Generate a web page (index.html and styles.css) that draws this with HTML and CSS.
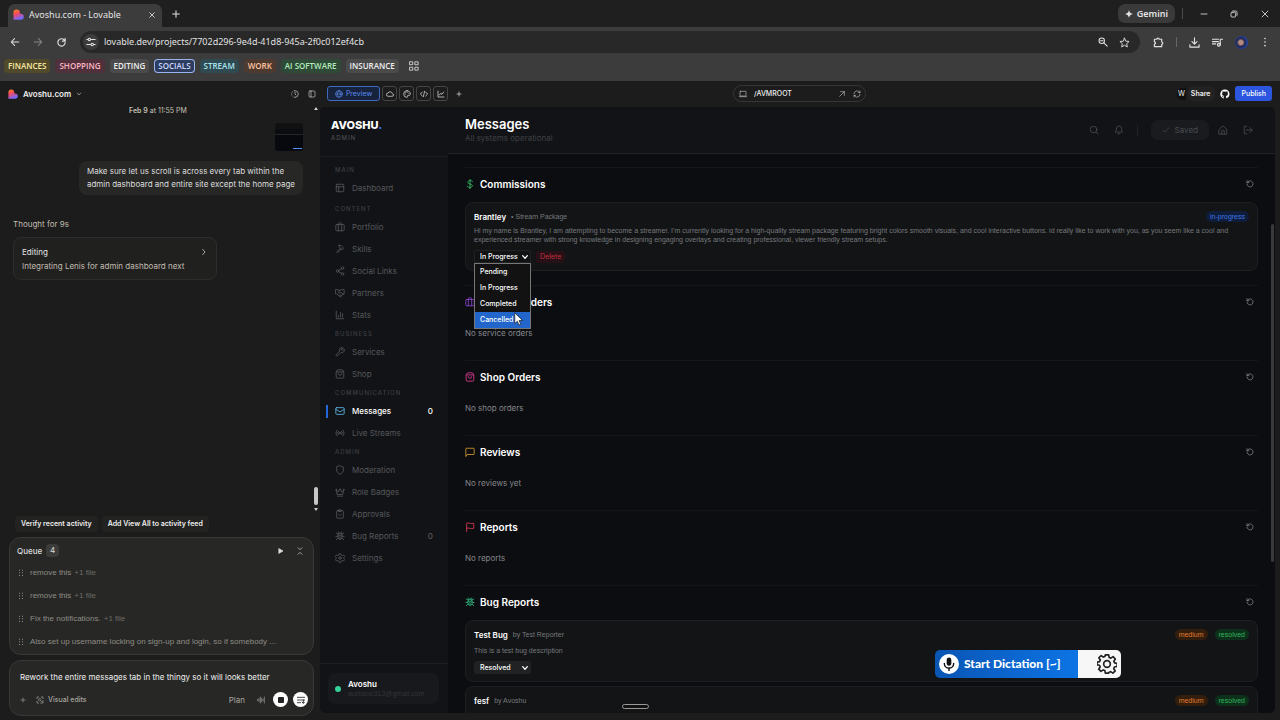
FILE: index.html
```html
<!DOCTYPE html>
<html lang="en">
<head>
<meta charset="utf-8">
<title>Avoshu.com - Lovable</title>
<link rel="stylesheet" href="styles.css">
</head>
<body>
<svg class="sprite" aria-hidden="true">
  <defs>
    <linearGradient id="heart" x1="0" y1="0" x2="0.4" y2="1"><stop offset="0.1" stop-color="#ff7a1f"/><stop offset="0.5" stop-color="#f0486a"/><stop offset="1" stop-color="#6f6bff"/></linearGradient>
    <symbol id="logo" viewBox="0 0 24 24"><path fill="url(#heart)" stroke="none" d="M1 8a7 7 0 0 1 14 0v2.500h2a6.500 6.500 0 0 1 0 13H1z"/></symbol>
    <symbol id="x" viewBox="0 0 24 24"><path d="M5 5l14 14M19 5L5 19"/></symbol>
    <symbol id="plus" viewBox="0 0 24 24"><path d="M12 4v16M4 12h16"/></symbol>
    <symbol id="back" viewBox="0 0 24 24"><path d="M21 12H3M11 4l-8 8 8 8"/></symbol>
    <symbol id="forward" viewBox="0 0 24 24"><path d="M3 12h18M13 4l8 8-8 8"/></symbol>
    <symbol id="reload" viewBox="0 0 24 24"><path d="M20 12a8 8 0 1 1-2.500-6L20 9M20 3v6h-6"/></symbol>
    <symbol id="tune" viewBox="0 0 24 24"><path d="M2 6h3M13 6h9M2 18h9M19 18h3"/><circle cx="8" cy="6" r="3"/><circle cx="15" cy="18" r="3"/></symbol>
    <symbol id="apps" viewBox="0 0 24 24"><path d="M2 2h7v7H2zM15 2h7v7h-7zM2 15h7v7H2zM15 15h7v7h-7z"/></symbol>
    <symbol id="zoomout" viewBox="0 0 24 24"><circle cx="9" cy="9" r="6.500"/><path d="M14 14l8 8M6 9h6"/></symbol>
    <symbol id="star" viewBox="0 0 24 24"><path d="M12 2.500l3 6.600 7 .7-5.300 4.800 1.600 7.100L12 18l-6.300 3.700 1.600-7.100L2 9.800l7-.7z"/></symbol>
    <symbol id="puzzle" viewBox="0 0 24 24"><path d="M3 5h5.500a2.500 2.500 0 0 1 5 0H19v6a2.500 2.500 0 0 1 0 5v5H3v-5.500a2.500 2.500 0 0 0 0-5z"/></symbol>
    <symbol id="download" viewBox="0 0 24 24"><path d="M12 2v13M6.500 10l5.500 5.500 5.500-5.500M2 17v5h20v-5"/></symbol>
    <symbol id="music" viewBox="0 0 24 24"><path d="M1 5h13M1 10h13M1 15h7M18 17V5h5"/><circle cx="15" cy="17" r="3"/></symbol>
    <symbol id="dots" viewBox="0 0 24 24"><g fill="currentColor" stroke="none"><circle cx="12" cy="3.500" r="2"/><circle cx="12" cy="12" r="2"/><circle cx="12" cy="20.500" r="2"/></g></symbol>
    <symbol id="spark" viewBox="0 0 24 24"><path fill="currentColor" stroke="none" d="M12 0c1 7 5 11 12 12-7 1-11 5-12 12-1-7-5-11-12-12C7 11 11 7 12 0z"/></symbol>
    <symbol id="minus" viewBox="0 0 24 24"><path d="M3 12h18"/></symbol>
    <symbol id="restore" viewBox="0 0 24 24"><rect x="3" y="7" width="14" height="14" rx="3"/><path d="M8 3h9a4 4 0 0 1 4 4v9"/></symbol>
    <symbol id="down" viewBox="0 0 24 24"><path d="M5 8l7 8 7-8"/></symbol>
    <symbol id="right" viewBox="0 0 24 24"><path d="M8 4l7 8-7 8"/></symbol>
    <symbol id="history" viewBox="0 0 24 24"><path d="M12 2a10 10 0 0 1 0 20M12 7v5l3 3"/><path stroke-dasharray="2 5" d="M12 22a10 10 0 0 1 0-20"/></symbol>
    <symbol id="panel" viewBox="0 0 24 24"><rect x="3" y="3" width="18" height="18" rx="3"/><path d="M9 3v18"/></symbol>
    <symbol id="globe" viewBox="0 0 24 24"><circle cx="12" cy="12" r="10"/><path d="M2 12h20M12 2c-6 6-6 14 0 20 6-6 6-14 0-20z"/></symbol>
    <symbol id="cloud" viewBox="0 0 24 24"><path d="M6.500 19a5 5 0 0 1-.5-10 7 7 0 0 1 13 2 4 4 0 0 1-.5 8z"/></symbol>
    <symbol id="palette" viewBox="0 0 24 24"><path d="M12 2a10 10 0 1 0 0 20c2 0 2-2 1.500-3-.8-2 .5-3 2-3H18c3 0 4-2 4-4 0-6-5-10-10-10z"/><path d="M7 12h.1M8.500 7.500h.1M13.500 6.500h.1M17.500 10h.1"/></symbol>
    <symbol id="code" viewBox="0 0 24 24"><path d="M7 6l-6 6 6 6M17 6l6 6-6 6M14 4l-4 16"/></symbol>
    <symbol id="chart" viewBox="0 0 24 24"><path d="M3 3v18h18M7 15l4-5 4 3 5-7"/></symbol>
    <symbol id="laptop" viewBox="0 0 24 24"><rect x="3" y="4" width="18" height="14" rx="1"/><path d="M1 20h22"/></symbol>
    <symbol id="upright" viewBox="0 0 24 24"><path d="M5 19L19 5M8 5h11v11"/></symbol>
    <symbol id="refresh" viewBox="0 0 24 24"><path d="M3 11a9 9 0 0 1 16-5l2 2M21 3v5h-5M21 13a9 9 0 0 1-16 5l-2-2M3 21v-5h5"/></symbol>
    <symbol id="github" viewBox="0 0 24 24"><path fill="currentColor" stroke="none" d="M12 1a11 11 0 0 0-3.500 21.500c.6.100.8-.3.800-.6v-2c-3 .7-3.700-1.400-3.700-1.400-.5-1.300-1.200-1.600-1.200-1.600-1-.7.1-.7.100-.7 1.100.1 1.700 1.100 1.700 1.100 1 1.700 2.600 1.200 3.200.9.100-.7.400-1.200.7-1.500-2.500-.3-5-1.200-5-5.400 0-1.200.4-2.200 1.100-3-.1-.3-.5-1.400.1-2.900 0 0 .9-.3 3 1.100a10.500 10.500 0 0 1 5.500 0c2.100-1.400 3-1.100 3-1.100.6 1.500.2 2.600.1 2.900.7.800 1.100 1.800 1.100 3 0 4.200-2.600 5.100-5 5.400.4.300.7 1 .7 2v3c0 .3.200.7.800.6A11 11 0 0 0 12 1z"/></symbol>
    <symbol id="search" viewBox="0 0 24 24"><circle cx="11" cy="11" r="8"/><path d="M17 17l5 5"/></symbol>
    <symbol id="bell" viewBox="0 0 24 24"><path d="M6 8a6 6 0 0 1 12 0c0 7 3 8 3 9H3c0-1 3-2 3-9M10 21h4"/></symbol>
    <symbol id="check" viewBox="0 0 24 24"><path d="M4 13l5 5L20 6"/></symbol>
    <symbol id="home" viewBox="0 0 24 24"><path d="M3 10l9-8 9 8v12H3zM9 22v-9h6v9"/></symbol>
    <symbol id="logout" viewBox="0 0 24 24"><path d="M9 3H3v18h6M8 12h14M16 6l6 6-6 6"/></symbol>
    <symbol id="layout" viewBox="0 0 24 24"><rect x="3" y="3" width="18" height="18" rx="2"/><path d="M3 9h18M9 9v12"/></symbol>
    <symbol id="case" viewBox="0 0 24 24"><rect x="2" y="6" width="20" height="15" rx="2"/><path d="M8 21V4a2 2 0 0 1 2-2h4a2 2 0 0 1 2 2v17"/></symbol>
    <symbol id="hammer" viewBox="0 0 24 24"><path d="M13 10l-9 9 2 2 9-9M9 3c5 0 8 2 10 5l2 2-4 4-7-7c0-2 0-3-1-4z"/></symbol>
    <symbol id="share" viewBox="0 0 24 24"><circle cx="18" cy="5" r="3"/><circle cx="6" cy="12" r="3"/><circle cx="18" cy="19" r="3"/><path d="M8.600 13.500l6.800 4M15.400 6.500l-6.800 4"/></symbol>
    <symbol id="shake" viewBox="0 0 24 24"><path d="M2 4h5l4 2 4-2h7v10h-2l-7 7-9-7H2zM11 6l-3 5c2 2 4 1 6-1l6 5M13 16l3 3M10 18l3 3"/></symbol>
    <symbol id="bars" viewBox="0 0 24 24"><path d="M3 3v18h18M8 17v-4M13 17V6M18 17v-8"/></symbol>
    <symbol id="wrench" viewBox="0 0 24 24"><path d="M15 6l3 3 4-4a6 6 0 0 1-8 8l-8 8a2 2 0 0 1-3-3l8-8a6 6 0 0 1 8-8z"/></symbol>
    <symbol id="bag" viewBox="0 0 24 24"><path d="M3 7l3-5h12l3 5v13a2 2 0 0 1-2 2H5a2 2 0 0 1-2-2zM3 7h18M8 11a4 4 0 0 0 8 0"/></symbol>
    <symbol id="mail" viewBox="0 0 24 24"><rect x="2" y="4" width="20" height="16" rx="2"/><path d="M2 8l10 6 10-6"/></symbol>
    <symbol id="radio" viewBox="0 0 24 24"><circle cx="12" cy="12" r="2"/><path d="M8 8a6 6 0 0 0 0 8M16 8a6 6 0 0 1 0 8M5 5a10 10 0 0 0 0 14M19 5a10 10 0 0 1 0 14"/></symbol>
    <symbol id="shield" viewBox="0 0 24 24"><path d="M12 2l8 3v7c0 5-3 8-8 10-5-2-8-5-8-10V5z"/></symbol>
    <symbol id="crown" viewBox="0 0 24 24"><path d="M3 8l5 4 4-8 4 8 5-4-3 10H6zM6 22h12"/><circle cx="3" cy="6" r="1"/><circle cx="21" cy="6" r="1"/></symbol>
    <symbol id="clip" viewBox="0 0 24 24"><rect x="4" y="4" width="16" height="18" rx="2"/><path d="M9 2h6v4H9zM9 14l2 2 4-4"/></symbol>
    <symbol id="bug" viewBox="0 0 24 24"><path d="M7 10a5 5 0 0 1 10 0v5a5 5 0 0 1-10 0zM12 20v-9M8 2l2 3M16 2l-2 3M8 7l-5-2M16 7l5-2M7 13H2M17 13h5M7 17l-4 4M17 17l4 4M7 10h10"/></symbol>
    <symbol id="hexgear" viewBox="0 0 24 24"><path d="M10 2h4l1 3 3 1 3-1 2 4-2 2v2l2 2-2 4-3-1-3 1-1 4h-4l-1-4-3-1-3 1-2-4 2-2v-2L1 9l2-4 3 1 3-1z"/><circle cx="12" cy="12" r="3"/></symbol>
    <symbol id="dollar" viewBox="0 0 24 24"><path d="M12 1v22M18 6c-1-2-3-2-6-2-7 0-7 8 0 8s8 8 0 8c-4 0-6-1-7-3"/></symbol>
    <symbol id="undo" viewBox="0 0 24 24"><path d="M3 12a9 9 0 1 0 3-7L3 8M3 2v6h6"/></symbol>
    <symbol id="message" viewBox="0 0 24 24"><path d="M2 22V4a1 1 0 0 1 1-1h18a1 1 0 0 1 1 1v13a1 1 0 0 1-1 1H6z"/></symbol>
    <symbol id="flag" viewBox="0 0 24 24"><path d="M4 23V3c5-3 9 3 17 0v12c-8 3-12-3-17 0"/></symbol>
    <symbol id="play" viewBox="0 0 24 24"><path fill="currentColor" d="M6 5l12 7-12 7z"/></symbol>
    <symbol id="collapse" viewBox="0 0 24 24"><path d="M6 2l6 6 6-6M6 22l6-6 6 6"/></symbol>
    <symbol id="grip" viewBox="0 0 24 24"><g fill="currentColor" stroke="none"><path d="M6 2h3v3H6zM15 2h3v3h-3zM6 10h3v3H6zM15 10h3v3h-3zM6 18h3v3H6zM15 18h3v3h-3z"/></g></symbol>
    <symbol id="select" viewBox="0 0 24 24"><path d="M3 8V3h5M16 3h5v5M3 16v5h5M14 21h7v-7M9 15a4 4 0 1 1 6-6M13 13l6 5"/></symbol>
    <symbol id="wave" viewBox="0 0 24 24"><path d="M2 10v4M6 7v10M10 3v18M14 7v10M18 9v6M22 3v18"/></symbol>
    <symbol id="queue" viewBox="0 0 24 24"><path d="M1 4h22M1 12h22M1 20h10M19 12v9M15 18l4 4 4-4"/></symbol>
    <symbol id="mic" viewBox="0 0 24 24"><rect x="8" y="1" width="8" height="14" rx="4" fill="currentColor" stroke="none"/><path d="M4 11a8 8 0 0 0 16 0M12 19v4"/></symbol>
    <symbol id="gear" viewBox="0 0 24 24"><path d="M10 1h4l.6 3.200 2 .8 2.700-1.800 2.700 2.800-1.800 2.600.9 2.100 3 .5v3.800l-3.200.6-.8 2 1.800 2.700-2.800 2.700-2.600-1.800-2 .8L14 23h-4l-.6-3.100-2-.8-2.700 1.800L2 18.200l1.800-2.700-.8-2L0 13V9.700l3.100-.6.900-2L2.200 4.500 5 1.900l2.500 1.800 2-.8z"/><circle cx="12" cy="12" r="4"/></symbol>
  </defs>
</svg>

<header class="browser">
  <div class="tabstrip">
    <div class="tab"><svg class="i12"><use href="#logo"/></svg><span class="tab-title">Avoshu.com - Lovable</span><button class="bare" aria-label="Close tab"><svg class="i8 bold"><use href="#x"/></svg></button></div>
    <button class="bare new-tab" aria-label="New tab"><svg class="i10 bold"><use href="#plus"/></svg></button>
    <div class="window-tools">
      <button class="gemini"><svg class="i8"><use href="#spark"/></svg>Gemini</button>
      <span class="vline"></span>
      <button class="bare" aria-label="Minimize"><svg class="i8 bold"><use href="#minus"/></svg></button>
      <button class="bare" aria-label="Restore"><svg class="i8 bold"><use href="#restore"/></svg></button>
      <button class="bare" aria-label="Close"><svg class="i10"><use href="#x"/></svg></button>
    </div>
  </div>
  <div class="toolbar">
    <button class="bare" aria-label="Back"><svg class="i10 bold"><use href="#back"/></svg></button>
    <button class="bare dim" aria-label="Forward"><svg class="i10 bold"><use href="#forward"/></svg></button>
    <button class="bare" aria-label="Reload"><svg class="i12 bold"><use href="#reload"/></svg></button>
    <div class="address">
      <button class="site-info" aria-label="Site information"><svg class="i10 bold"><use href="#tune"/></svg></button>
      <input aria-label="Address" value="lovable.dev/projects/7702d296-9e4d-41d8-945a-2f0c012ef4cb">
      <button class="bare" aria-label="Zoom"><svg class="i10 bold"><use href="#zoomout"/></svg></button>
      <button class="bare" aria-label="Bookmark"><svg class="i12"><use href="#star"/></svg></button>
    </div>
    <div class="extensions">
      <button class="bare" aria-label="Extensions"><svg class="i12 bold"><use href="#puzzle"/></svg></button>
      <span class="vline"></span>
      <button class="bare" aria-label="Downloads"><svg class="i12 bold"><use href="#download"/></svg></button>
      <button class="bare" aria-label="Media"><svg class="i12 bold"><use href="#music"/></svg></button>
      <button class="avatar" aria-label="Profile"></button>
      <button class="bare" aria-label="Menu"><svg class="i10"><use href="#dots"/></svg></button>
    </div>
  </div>
  <nav class="bookmarks" aria-label="Bookmarks">
    <button class="chip yellow">FINANCES</button><button class="chip red">SHOPPING</button><button class="chip grey">EDITING</button><button class="chip blue">SOCIALS</button><button class="chip teal">STREAM</button><button class="chip orange">WORK</button><button class="chip green">AI SOFTWARE</button><button class="chip grey">INSURANCE</button>
    <button class="bare apps" aria-label="All groups"><svg class="i10"><use href="#apps"/></svg></button>
  </nav>
</header>

<div class="workspace">
  <section class="chat">
    <div class="chat-head">
      <svg class="i10"><use href="#logo"/></svg><button class="bare project">Avoshu.com<svg class="i6"><use href="#down"/></svg></button>
      <span class="grow"></span>
      <button class="bare" aria-label="History"><svg class="i8"><use href="#history"/></svg></button>
      <button class="bare" aria-label="Toggle panel"><svg class="i8"><use href="#panel"/></svg></button>
    </div>
    <div class="chat-log">
      <p class="date"><b>Feb 9</b> at 11:55 PM</p>
      <div class="thumb"><i></i></div>
      <p class="bubble">Make sure let us scroll is across every tab within the<br>admin dashboard and entire site except the home page</p>
      <p class="thought">Thought for 9s</p>
      <button class="edit-card"><span class="edit-title">Editing<svg class="i8"><use href="#right"/></svg></span><span>Integrating Lenis for admin dashboard next</span></button>
      <div class="chat-scroll"><i class="up"></i><span class="grow"></span><i class="thumb-bar"></i><i class="dn"></i></div>
    </div>
    <div class="suggestions"><button>Verify recent activity</button><button>Add View All to activity feed</button></div>
    <div class="queue">
      <div class="queue-head"><h2>Queue</h2><span class="count">4</span><span class="grow"></span><button class="bare" aria-label="Run queue"><svg class="i8"><use href="#play"/></svg></button><button class="bare" aria-label="Collapse"><svg class="i8"><use href="#collapse"/></svg></button></div>
      <ul>
        <li><svg class="i8"><use href="#grip"/></svg>remove this <small>+1 file</small></li>
        <li><svg class="i8"><use href="#grip"/></svg>remove this <small>+1 file</small></li>
        <li><svg class="i8"><use href="#grip"/></svg>Fix the notifications. <small>+1 file</small></li>
        <li><svg class="i8"><use href="#grip"/></svg>Also set up username locking on sign-up and login, so if somebody ...</li>
      </ul>
    </div>
    <div class="composer">
      <textarea aria-label="Message" rows="1">Rework the entire messages tab in the thingy so it will looks better</textarea>
      <div class="composer-tools">
        <button class="bare" aria-label="Attach"><svg class="i6 bold"><use href="#plus"/></svg></button>
        <button class="bare visual"><svg class="i8"><use href="#select"/></svg>Visual edits</button>
        <span class="grow"></span>
        <button class="bare">Plan</button>
        <button class="bare voice" aria-label="Voice"><svg class="i8"><use href="#wave"/></svg></button>
        <button class="round" aria-label="Stop"><i></i></button>
        <button class="round" aria-label="Queue message"><svg class="i8 bold"><use href="#queue"/></svg></button>
      </div>
    </div>
  </section>

  <section class="preview">
    <div class="preview-bar">
      <div class="views">
        <button class="view active"><svg class="i8"><use href="#globe"/></svg>Preview</button>
        <button class="view" aria-label="Cloud"><svg class="i8 bold"><use href="#cloud"/></svg></button>
        <button class="view" aria-label="Design"><svg class="i8 bold"><use href="#palette"/></svg></button>
        <button class="view" aria-label="Code"><svg class="i8 bold"><use href="#code"/></svg></button>
        <button class="view" aria-label="Analytics"><svg class="i8 bold"><use href="#chart"/></svg></button>
        <button class="bare more" aria-label="More"><svg class="i6 bold"><use href="#plus"/></svg></button>
      </div>
      <div class="route"><svg class="i8"><use href="#laptop"/></svg><input aria-label="Route" value="/AVMROOT"><button class="bare" aria-label="Open"><svg class="i8"><use href="#upright"/></svg></button><button class="bare" aria-label="Refresh"><svg class="i8"><use href="#refresh"/></svg></button></div>
      <div class="publish-tools"><span class="member">W</span><button class="share">Share</button><button class="bare git" aria-label="GitHub"><svg class="i10"><use href="#github"/></svg></button><button class="publish">Publish</button></div>
    </div>

    <div class="site">
      <aside class="sidebar">
        <div class="brand"><strong>AVOSHU<em>.</em></strong><span>ADMIN</span></div>
        <nav aria-label="Admin">
          <h3>MAIN</h3>
          <a href="#"><svg class="i10"><use href="#layout"/></svg>Dashboard</a>
          <h3 class="spaced">CONTENT</h3>
          <a href="#"><svg class="i10"><use href="#case"/></svg>Portfolio</a>
          <a href="#"><svg class="i10"><use href="#hammer"/></svg>Skills</a>
          <a href="#"><svg class="i10"><use href="#share"/></svg>Social Links</a>
          <a href="#"><svg class="i10"><use href="#shake"/></svg>Partners</a>
          <a href="#"><svg class="i10"><use href="#bars"/></svg>Stats</a>
          <h3>BUSINESS</h3>
          <a href="#"><svg class="i10"><use href="#wrench"/></svg>Services</a>
          <a href="#"><svg class="i10"><use href="#bag"/></svg>Shop</a>
          <h3>COMMUNICATION</h3>
          <a href="#" class="current"><svg class="i10"><use href="#mail"/></svg>Messages<b>0</b></a>
          <a href="#"><svg class="i10"><use href="#radio"/></svg>Live Streams</a>
          <h3>ADMIN</h3>
          <a href="#"><svg class="i10"><use href="#shield"/></svg>Moderation</a>
          <a href="#"><svg class="i10"><use href="#crown"/></svg>Role Badges</a>
          <a href="#"><svg class="i10"><use href="#clip"/></svg>Approvals</a>
          <a href="#"><svg class="i10"><use href="#bug"/></svg>Bug Reports<b>0</b></a>
          <a href="#"><svg class="i10"><use href="#hexgear"/></svg>Settings</a>
        </nav>
        <div class="account"><div class="user"><i></i><div><strong>Avoshu</strong><span>aurbano313@gmail.com</span></div></div></div>
      </aside>

      <main>
        <header class="page-head">
          <div><h1>Messages</h1><p>All systems operational</p></div>
          <div class="page-tools">
            <button class="bare" aria-label="Search"><svg class="i10"><use href="#search"/></svg></button>
            <button class="bare" aria-label="Notifications"><svg class="i10"><use href="#bell"/></svg></button>
            <span class="vline"></span>
            <button class="saved"><svg class="i8"><use href="#check"/></svg>Saved</button>
            <button class="bare" aria-label="Home"><svg class="i10"><use href="#home"/></svg></button>
            <button class="bare" aria-label="Log out"><svg class="i10"><use href="#logout"/></svg></button>
          </div>
        </header>
        <div class="content">
          <section class="block">
            <div class="block-head"><svg class="i10 c-green"><use href="#dollar"/></svg><h2>Commissions</h2><button class="bare" aria-label="Reload commissions"><svg class="i8"><use href="#undo"/></svg></button></div>
            <article class="card">
              <div class="card-head"><h4>Brantley</h4><span>• Stream Package</span><span class="grow"></span><span class="tag t-blue">in-progress</span></div>
              <p class="long">Hi my name is Brantley, I am attempting to become a streamer. I'm currently looking for a high-quality stream package featuring bright colors smooth visuals, and cool interactive buttons. id really like to work with you, as you seem like a cool and experienced streamer with strong knowledge in designing engaging overlays and creating professional, viewer friendly stream setups.</p>
              <div class="actions">
                <div class="picker open">
                  <select aria-label="Commission status"><option>In Progress</option><option>Pending</option><option>Completed</option><option>Cancelled</option></select><svg class="i8"><use href="#down"/></svg>
                  <div class="menu" role="listbox" aria-label="Status"><button role="option">Pending</button><button role="option">In Progress</button><button role="option">Completed</button><button role="option" class="hover">Cancelled</button>
                    <svg class="pointer" viewBox="0 0 12 18"><path d="M1 1v14l3.500-3 2.200 5 2.300-1-2.200-5H11z"/></svg></div>
                </div>
                <button class="delete">Delete</button>
              </div>
            </article>
          </section>
          <section class="block">
            <div class="block-head"><svg class="i10 c-purple"><use href="#case"/></svg><h2>Service Orders</h2><button class="bare" aria-label="Reload service orders"><svg class="i8"><use href="#undo"/></svg></button></div>
            <p class="empty">No service orders</p>
          </section>
          <section class="block">
            <div class="block-head"><svg class="i10 c-pink"><use href="#bag"/></svg><h2>Shop Orders</h2><button class="bare" aria-label="Reload shop orders"><svg class="i8"><use href="#undo"/></svg></button></div>
            <p class="empty">No shop orders</p>
          </section>
          <section class="block">
            <div class="block-head"><svg class="i10 c-amber"><use href="#message"/></svg><h2>Reviews</h2><button class="bare" aria-label="Reload reviews"><svg class="i8"><use href="#undo"/></svg></button></div>
            <p class="empty">No reviews yet</p>
          </section>
          <section class="block">
            <div class="block-head"><svg class="i10 c-red"><use href="#flag"/></svg><h2>Reports</h2><button class="bare" aria-label="Reload reports"><svg class="i8"><use href="#undo"/></svg></button></div>
            <p class="empty">No reports</p>
          </section>
          <section class="block">
            <div class="block-head"><svg class="i10 c-mint"><use href="#bug"/></svg><h2>Bug Reports</h2><button class="bare" aria-label="Reload bug reports"><svg class="i8"><use href="#undo"/></svg></button></div>
            <article class="card">
              <div class="card-head"><h4>Test Bug</h4><span>by Test Reporter</span><span class="grow"></span><span class="tag t-orange">medium</span><span class="tag t-green">resolved</span></div>
              <p>This is a test bug description</p>
              <div class="actions"><div class="picker"><select aria-label="Bug status"><option>Resolved</option></select><svg class="i8"><use href="#down"/></svg></div></div>
            </article>
            <article class="card">
              <div class="card-head"><h4>fesf</h4><span>by Avoshu</span><span class="grow"></span><span class="tag t-orange">medium</span><span class="tag t-green">resolved</span></div>
            </article>
          </section>
        </div>
        <i class="page-scroll"></i>
      </main>
    </div>
  </section>
</div>
<i class="drag-pill"></i>
<div class="dictation"><button class="start"><span class="mic"><svg class="i14 bold"><use href="#mic"/></svg></span>Start Dictation [~]</button><button class="prefs" aria-label="Dictation settings"><svg class="i20"><use href="#gear"/></svg></button></div>
</body>
</html>
```
FILE: styles.css
```css
* { box-sizing: border-box; }
body { margin: 0; height: 100vh; display: flex; flex-direction: column; overflow: hidden; background: #1c1c1c; color: #eee; font: 8px/12px Inter, "Liberation Sans", sans-serif; }
h1, h2, h3, h4, p, ul { margin: 0; padding: 0; }
ul { list-style: none; }
button, input, select, textarea { font: inherit; color: inherit; border: 0; margin: 0; padding: 0; background: none; outline: 0; }
button, a { white-space: nowrap; }
svg { fill: none; stroke: currentColor; stroke-width: 2; stroke-linecap: round; stroke-linejoin: round; flex: none; display: block; overflow: visible; }
.sprite { position: absolute; width: 0; height: 0; }
.i6 { width: 6px; height: 6px; }
.i8 { width: 8px; height: 8px; }
.i10 { width: 10px; height: 10px; }
.i12 { width: 11px; height: 11px; }
.i14 { width: 14px; height: 14px; }
.i20 { width: 20px; height: 20px; }
.bold { stroke-width: 2.5; }
.bare { display: flex; align-items: center; justify-content: center; }
.dim { opacity: .45; }
.grow { flex: 1; }
.vline { width: 1px; height: 11px; background: #4a4a4a; }

/* browser chrome */
.browser { background: #3c3c3c; color: #e2e2e2; font-family: "Noto Sans", "Open Sans", sans-serif; }
.tabstrip { display: flex; align-items: center; height: 27px; background: #1f1f1f; padding-left: 8px; }
.tab { display: flex; align-items: center; width: 154px; height: 23px; align-self: flex-end; padding: 0 6px 2px 5px; gap: 5px; background: #3c3c3c; border-radius: 7px 7px 0 0; font-size: 9px; }
.tab-title { flex: 1; }
.new-tab { margin-left: 9px; }
.window-tools { display: flex; align-items: center; margin-left: auto; padding-right: 10px; gap: 22px; }
.gemini { display: flex; align-items: center; gap: 4px; height: 19px; padding: 0 7px; border-radius: 7px; background: #3a3a3a; font-size: 9px; font-weight: 600; margin-right: -15px; }
.window-tools .vline { margin-right: -5px; }
.toolbar { display: flex; align-items: center; height: 30px; padding: 0 10px; gap: 13px; }
.address { flex: 1; display: flex; align-items: center; gap: 11px; height: 22px; padding: 0 10px 0 3px; border-radius: 11px; background: #282828; }
.address input { flex: 1; min-width: 0; font-size: 9px; margin-left: -6px; }
.site-info { display: flex; align-items: center; justify-content: center; width: 16px; height: 16px; border-radius: 50%; background: #3c3c3c; }
.extensions { display: flex; align-items: center; gap: 12px; }
.extensions .vline { height: 10px; background: #666; }
.avatar { width: 13px; height: 13px; border-radius: 50%; background: radial-gradient(circle at 45% 50%, #b58a80 0 2px, #23264a 4px, #1e46b4 7px); }
.bookmarks { display: flex; align-items: center; gap: 5px; height: 24px; padding: 0 4px 6px; font-family: "Open Sans", sans-serif; font-size: 8px; font-weight: 600; }
.chip { height: 14px; padding: 0 4px; border-radius: 4px; line-height: 14px; }
.yellow { background: #514a2b; color: #f7e9a0; }
.red { background: #50303a; color: #ffb6c6; }
.grey { background: #4b4b4b; color: #eee; }
.blue { background: #2e3c5e; color: #c8d8ff; box-shadow: inset 0 0 0 1px #9ab5ee; }
.teal { background: #2f4a50; color: #a9e6f2; }
.orange { background: #4f3a30; color: #ffc4a0; }
.green { background: #2f4a36; color: #b0ecbc; }
.apps { margin-left: 5px; }

.workspace { flex: 1; min-height: 0; display: flex; }

/* chat column */
.chat { width: 25%; display: flex; flex-direction: column; padding-bottom: 4px; }
.chat-head { display: flex; align-items: center; height: 25px; padding: 0 4px 0 8px; gap: 9px; color: #ccc; }
.chat-head > svg { margin-right: -4px; }
.project { font-weight: 600; gap: 5px; color: #eee; }
.chat-log { flex: 1; position: relative; display: flex; flex-direction: column; padding: 0 17px 0 13px; color: #ddd; }
.date { text-align: center; font-size: 7px; line-height: 9px; color: #c4c0b4; }
.date b { font-weight: 600; }
.thumb { align-self: flex-end; width: 28px; height: 28px; margin-top: 8px; border-radius: 3px; background: linear-gradient(#111 0 6px, #0b0c10 6px 11px, #25272a 11px 12px, #07090e 12px); padding: 25px 1px 0 18px; }
.thumb i { display: block; height: 1px; background: #4d8ff0; }
.bubble { align-self: flex-end; margin-top: 10px; padding: 4px 8px; border-radius: 8px; background: #272725; line-height: 13px; white-space: nowrap; }
.thought { margin-top: 23px; color: #c0bcb0; }
.edit-card { width: 204px; height: 43px; margin-top: 7px; padding: 0 8px; border: 1px solid #2d2d2b; border-radius: 8px; background: #20201f; text-align: left; line-height: 14px; display: flex; flex-direction: column; justify-content: center; color: #c0bcb0; }
.edit-title { display: flex; justify-content: space-between; align-items: center; align-self: stretch; color: #e5e5e5; }
.chat-scroll { position: absolute; right: 2px; top: 1px; bottom: 5px; width: 5px; display: flex; flex-direction: column; align-items: center; }
.up, .dn { border: 2px solid transparent; }
.up { border-bottom: 3px solid #ccc; border-top: 0; }
.dn { border-top: 3px solid #ccc; border-bottom: 0; }
.thumb-bar { width: 4px; height: 18px; border-radius: 2px; background: #c8c8c8; margin-bottom: 3px; }
.suggestions { display: flex; gap: 4px; padding: 0 15px 5px; }
.suggestions button { height: 16px; padding: 0 6px; border-radius: 4px; background: #222221; font-size: 7px; font-weight: 600; }
.queue, .composer { margin: 0 6px 0 9px; border: 1px solid #383836; border-radius: 12px; background: #272725; }
.queue { padding: 2px 9px 1px 7px; }
.queue-head { display: flex; align-items: center; height: 21px; gap: 4px; color: #ddd; }
.queue-head button { margin-left: 7px; }
.queue h2 { font-size: 8px; font-weight: 500; }
.count { width: 13px; height: 13px; border-radius: 4px; background: #3b3b39; text-align: center; }
.queue li { display: flex; align-items: center; height: 23px; color: #8e8c86; white-space: nowrap; gap: 3px; font-family: "Liberation Sans", sans-serif; }
.queue li svg { margin-right: 2px; }
.queue small { font-size: 8px; color: #6d6b66; }
.composer { margin-top: 5px; padding: 8px 5px 3px 7px; }
.composer textarea { display: block; width: 100%; height: 18px; line-height: 16px; padding: 0 3px; resize: none; overflow: hidden; white-space: nowrap; }
.composer-tools { display: flex; align-items: center; height: 25px; color: #a8a6a0; gap: 5px; }
.composer-tools > :first-child { margin: 0 5px 0 3px; }
.visual { gap: 4px; font-size: 7px; font-weight: 500; }
.voice { margin: 0 3px 0 7px; }
.round { display: flex; align-items: center; justify-content: center; width: 15px; height: 15px; border-radius: 50%; background: #fff; color: #222; }
.round i { width: 6px; height: 6px; border-radius: 1px; background: #222; }

/* preview column */
.preview { flex: 1; min-width: 0; display: flex; flex-direction: column; padding: 0 5px 7px 0; }
.preview-bar { display: flex; align-items: center; height: 26px; padding: 0 3px 1px 7px; }
.views, .publish-tools { flex: 1; display: flex; align-items: center; gap: 2px; }
.view { display: flex; align-items: center; justify-content: center; width: 15px; height: 15px; border: 1px solid #454545; border-radius: 3px; color: #ccc; }
.view.active { width: 53px; gap: 3px; border-color: #3f6ac2; background: #17223c; color: #5c8df0; font-size: 7px; }
.more { margin-left: 6px; }
.route { display: flex; align-items: center; gap: 7px; width: 133px; height: 17px; padding: 0 4px 0 5px; border: 1px solid #363636; border-radius: 9px; color: #bbb; }
.route input { flex: 1; min-width: 0; color: #eee; font-size: 7px; font-weight: 500; }
.publish-tools { justify-content: flex-end; }
.member { font-size: 7px; width: 9px; background: #101010; border-radius: 5px 0 0 5px; text-align: center; }
.share { height: 15px; padding: 0 5px 0 3px; font-size: 7px; font-weight: 600; border-radius: 5px; background: #222; }
.git { width: 14px; margin: 0 1px; color: #fff; }
.publish { height: 15px; padding: 0 6px; border-radius: 3px; background: #2c55e0; color: #fff; font-size: 7px; font-weight: 500; }
.site { flex: 1; min-height: 0; display: flex; border-radius: 6px; overflow: hidden; background: #0c0d11; }
.sidebar { width: 128px; display: flex; flex-direction: column; background: #121316; color: #55575b; }
.brand { height: 50px; padding: 12px 11px; border-bottom: 1px solid #1d1f22; display: flex; flex-direction: column; }
.brand strong { font-size: 11px; line-height: 13px; font-weight: 800; color: #fff; }
.brand em { font-style: normal; color: #2f7df0; }
.brand span { font-size: 6px; letter-spacing: 1px; }
.sidebar nav { flex: 1; padding-top: 5px; }
.sidebar h3 { height: 15px; line-height: 15px; padding-left: 15px; font-size: 6px; font-weight: 500; letter-spacing: 1px; color: #3d3f43; }
.sidebar h3.spaced { margin-top: 2px; }
.sidebar a { display: flex; align-items: center; gap: 7px; height: 22px; margin: 0 7px 0 6px; padding: 0 8px 0 9px; text-decoration: none; color: inherit; }
.sidebar a b { margin-left: auto; font-weight: 500; }
.sidebar a.current { color: #fff; font-weight: 500; background: linear-gradient(#2468d8, #2468d8) left center / 2px 13px no-repeat; }
.current svg { color: #5db9ea; }
.account { padding: 9px 9px 9px 8px; border-top: 1px solid #1d1f22; }
.user { display: flex; align-items: center; gap: 7px; height: 31px; padding: 0 7px; border-radius: 7px; background: #17191c; line-height: 9px; }
.user i { width: 6px; height: 6px; border-radius: 50%; background: #34d399; }
.user strong, .user span { display: block; }
.user strong { color: #fff; font-weight: 600; }
.user span { font-family: "Liberation Sans", sans-serif; font-size: 7px; color: #33353a; }

main { flex: 1; min-width: 0; position: relative; display: flex; flex-direction: column; }
.page-head { display: flex; justify-content: space-between; align-items: center; height: 47px; padding: 0 22px 0 17px; border-bottom: 1px solid #202226; background: #121316; }
h1 { font-size: 13px; line-height: 16px; font-weight: 600; color: #fff; }
.page-head p { color: #3f4145; }
.page-tools { display: flex; align-items: center; gap: 15px; color: #4a4c50; }
.page-tools .vline { background: #202226; margin: 0 -2px; }
.saved { display: flex; align-items: center; gap: 5px; height: 20px; padding: 0 11px; margin-right: -6px; border-radius: 7px; background: #191b1f; }
.content { flex: 1; min-height: 0; overflow: hidden; padding: 13px 17px 0 17px; }
.block { border-top: 1px solid #14161a; padding-bottom: 10px; }
.block-head { display: flex; align-items: center; height: 34px; gap: 5px; padding-bottom: 2px; }
.block-head h2 { flex: 1; font-size: 10px; font-weight: 600; color: #fff; }
.block-head .bare { margin-right: 4px; color: #999; }
.empty { height: 30px; line-height: 27px; color: #85878a; }
.card { min-height: 62px; border: 1px solid #1d1f21; border-radius: 8px; background: #121416; padding: 8px 8px 7px; margin-bottom: 4px; font-family: "Liberation Sans", sans-serif; }
.card-head { display: flex; align-items: center; gap: 5px; height: 11px; font-size: 7px; color: #77797c; }
.card h4 { font-family: Inter, sans-serif; font-size: 8px; font-weight: 600; color: #fff; }
.card p { font-size: 7px; line-height: 9px; margin-top: 6px; color: #77797c; }
.card p.long { margin-top: 4px; }
.tag { height: 11px; line-height: 11px; padding: 0 4px; margin-left: 2px; border-radius: 6px; }
.t-blue { background: #101d3a; color: #3b76e8; }
.t-orange { background: #331e0e; color: #e07a2c; }
.t-green { background: #0d301b; color: #32b45c; }
.actions { display: flex; align-items: center; gap: 5px; margin-top: 6px; font-family: Inter, sans-serif; }
.picker { position: relative; width: 57px; height: 13px; border-radius: 3px; background: #202224; color: #fff; }
.picker select { display: block; width: 100%; height: 100%; padding-left: 6px; appearance: none; font-size: 7px; font-weight: 500; }
.picker > svg { position: absolute; right: 2px; top: 3px; stroke-width: 4; pointer-events: none; }
.picker.open { background: #101214; box-shadow: inset 0 0 0 1px #222; }
.menu { position: absolute; z-index: 5; top: 13px; left: 0; width: 57px; border: 1px solid #777; background: #121212; }
.menu button { display: block; width: 100%; height: 16px; padding-left: 5px; text-align: left; font-size: 7px; font-weight: 500; }
.menu .hover { background: #2266cc; }
.pointer { position: absolute; left: 39px; top: 48px; width: 9px; height: 14px; fill: #fff; stroke: #222; stroke-width: 1; }
.delete { height: 12px; padding: 0 4px; border-radius: 3px; background: #271117; color: #c42d3c; font-size: 7px; }
.c-green { color: #37c065; } .c-purple { color: #8b45d0; } .c-pink { color: #dc3c94; } .c-amber { color: #d99a35; } .c-red { color: #dc3c54; } .c-mint { color: #2fb880; }
.page-scroll { position: absolute; right: 1px; top: 117px; width: 3px; height: 338px; background: #38393b; border-radius: 2px; }

/* desktop overlays */
.drag-pill { position: absolute; left: 622px; bottom: 11px; width: 27px; height: 5px; border: 1px solid #999; border-radius: 3px; background: #111; }
.dictation { position: absolute; right: 159px; bottom: 42px; display: flex; height: 28px; border-radius: 5px; overflow: hidden; }
.start { display: flex; align-items: center; gap: 5px; width: 143px; padding-left: 4px; background: linear-gradient(90deg, #0a55b4, #0d74e4); color: #fff; font-family: Lato, sans-serif; font-size: 12px; font-weight: 900; }
.mic { display: flex; align-items: center; justify-content: center; width: 20px; height: 20px; border-radius: 50%; background: #fff; color: #111; }
.prefs { display: flex; align-items: center; justify-content: center; width: 43px; padding-left: 14px; background: #f7f7f7; color: #222; }
```
